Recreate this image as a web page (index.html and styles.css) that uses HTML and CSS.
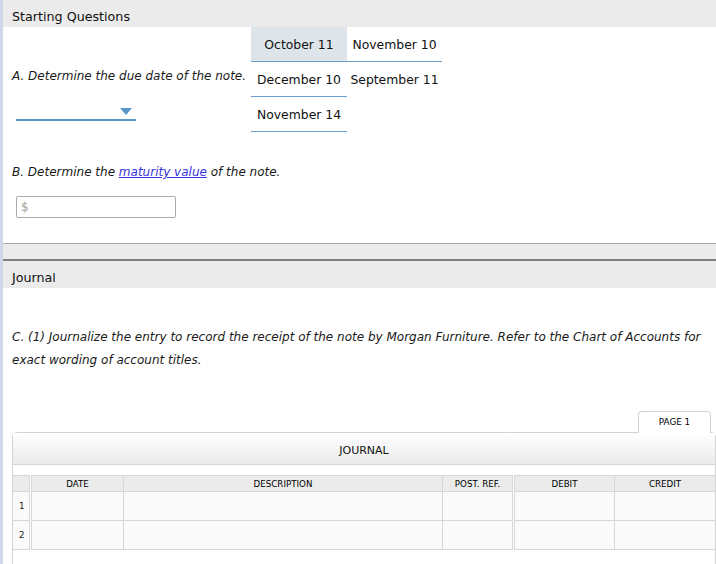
FILE: index.html
```html
<!DOCTYPE html>
<html>
<head>
<meta charset="utf-8">
<title>Starting Questions</title>
<link rel="stylesheet" href="styles.css">
</head>
<body>
<div class="page">
  <div class="sec-head">Starting Questions</div>
  <div class="qa">
    <div class="qa-left">
      <div class="q">A. Determine the due date of the note.</div>
      <div class="dropdown"><span class="caret"></span></div>
    </div>
    <div class="opts">
      <div class="opt sel">October 11</div>
      <div class="opt">November 10</div>
      <div class="opt">December 10</div>
      <div class="opt nob">September 11</div>
      <div class="opt">November 14</div>
    </div>
  </div>
  <div class="qb">
    <div class="q">B. Determine the <a class="link">maturity value</a> of the note.</div>
    <div class="money"><span class="dollar">$</span></div>
  </div>
  <div class="divider"></div>
  <div class="sec-head journal-head">Journal</div>
  <p class="qc">C. (1) Journalize the entry to record the receipt of the note by Morgan Furniture. Refer to the Chart of Accounts for exact wording of account titles.</p>
  <div class="tabs"><div class="tab">PAGE 1</div></div>
  <div class="jbox">
    <div class="jtitle">JOURNAL</div>
    <div class="jtable">
      <div class="grp g-num">
        <div class="c h"></div>
        <div class="c num">1</div>
        <div class="c num">2</div>
      </div>
      <div class="grp g-mid">
        <div class="c h">DATE</div>
        <div class="c h">DESCRIPTION</div>
        <div class="c h">POST. REF.</div>
        <div class="c"></div>
        <div class="c"></div>
        <div class="c"></div>
        <div class="c"></div>
        <div class="c"></div>
        <div class="c"></div>
      </div>
      <div class="grp g-right">
        <div class="c h">DEBIT</div>
        <div class="c h last">CREDIT</div>
        <div class="c"></div>
        <div class="c last"></div>
        <div class="c"></div>
        <div class="c last"></div>
      </div>
    </div>
  </div>
</div>
</body>
</html>
```

FILE: styles.css
```css
* { box-sizing: border-box; }
html, body { margin: 0; padding: 0; background: #fff; overflow: hidden; }
body { font-family: "DejaVu Sans", Verdana, sans-serif; color: #1a1a1a; }

.page {
  border-left: 3px solid #cdd8ea;
  min-height: 564px;
  width: 716px;
}

.sec-head {
  background: #ebebeb;
  height: 27px;
  padding: 9px 0 0 9px;
  font-size: 12.7px;
  line-height: 16px;
  color: #111;
}

.qa { display: flex; }
.qa-left { width: 248px; padding: 41px 0 0 9px; }

.q { font-style: italic; font-size: 12px; line-height: 16px; color: #1a1a1a; }

.dropdown {
  margin: 17px 0 0 4px;
  width: 120px;
  height: 20px;
  border-bottom: 2px solid #5b96c8;
  display: flex;
  justify-content: flex-end;
  padding: 7px 4px 0 0;
}
.caret {
  width: 0;
  height: 0;
  border-left: 6.5px solid transparent;
  border-right: 6.5px solid transparent;
  border-top: 7px solid #5b96c8;
}

.opts {
  display: grid;
  grid-template-columns: 96px 95px;
  grid-auto-rows: 35px;
}
.opt {
  border-bottom: 1px solid #6c9fcb;
  display: flex;
  align-items: center;
  justify-content: center;
  font-size: 12.4px;
  color: #111;
}
.opt.sel { background: #dde5ea; }
.opt.nob { border-bottom-color: transparent; }

.qb { padding: 32px 0 0 9px; }
.link { color: #3535dd; text-decoration: underline; }

.money {
  margin: 16px 0 0 4px;
  width: 160px;
  height: 22px;
  border: 1px solid #ababab;
  border-radius: 2px;
  padding-left: 4px;
  font-size: 12px;
  line-height: 20px;
  color: #a0a0a0;
}

.divider {
  margin-top: 25px;
  height: 18px;
  border-top: 1px solid #a9a9a9;
  border-bottom: 2px solid #808080;
  background: #ebebeb;
}

.qc {
  margin: 38px 0 0;
  padding-left: 9px;
  font-style: italic;
  font-size: 12px;
  line-height: 23px;
  color: #1a1a1a;
}

.tabs {
  margin: 39px 0 0 9px;
  width: 704px;
  display: flex;
  justify-content: flex-end;
  padding-right: 5px;
}
.tab {
  position: relative;
  z-index: 1;
  width: 73px;
  height: 22px;
  border: 1px solid #d3d3d3;
  border-bottom: none;
  border-radius: 4px 4px 0 0;
  background: #fff;
  margin-bottom: -1px;
  font-size: 8.8px;
  text-align: center;
  line-height: 21px;
  color: #000;
}

.jbox {
  margin-left: 9px;
  width: 704px;
  border: 1px solid #d3d3d3;
  border-radius: 5px 5px 0 0;
  padding-bottom: 40px;
}
.jtitle {
  height: 32px;
  border-bottom: 1px solid #d6d6d6;
  background: linear-gradient(#ffffff, #ebebeb);
  text-align: center;
  font-size: 11px;
  line-height: 29px;
  padding-top: 3px;
  color: #111;
}

.jtable { display: flex; gap: 1px; margin-top: 10px; }
.grp { display: grid; border-top: 1px solid #d6d6d6; }
.g-num { grid-template-columns: 17px; }
.g-mid { grid-template-columns: 92px 319px 70px; border-left: 1px solid #d6d6d6; }
.g-right { grid-template-columns: 100px 100px; border-left: 1px solid #d6d6d6; }

.c {
  border-right: 1px solid #d6d6d6;
  border-bottom: 1px solid #d6d6d6;
  background: #fafafa;
  height: 29px;
}
.c.last { border-right: none; }
.c.h {
  background: #ebebeb;
  height: 16px;
  font-size: 8.7px;
  line-height: 17px;
  text-align: center;
  color: #000;
}
.c.num {
  font-size: 8.7px;
  line-height: 28px;
  padding-left: 6px;
  color: #222;
}
```
